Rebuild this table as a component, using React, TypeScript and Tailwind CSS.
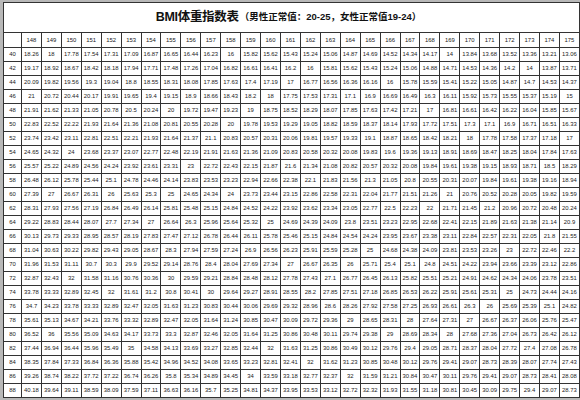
const heights = Array.from({ length: 28 }, (_, i) => 148 + i);
const weights = Array.from({ length: 25 }, (_, i) => 40 + i * 2);

function bmi(w: number, h: number) {
  const v = w / ((h / 100) * (h / 100));
  if (Math.abs(v - Math.round(v)) < 0.035) return String(Math.round(v));
  return String(Math.round(v * 100) / 100);
}

export default function App() {
  return (
    <div className="w-[580px] h-[400px] bg-[#b8b8b8] pl-[3px] pt-[2px] overflow-hidden">
      <div className="w-[577px] bg-white border-t border-[#333]">
        <div className="h-[29px] flex items-center justify-center border-x border-[#333] font-bold text-[#111] pr-[6px]" style={{ fontFamily: "'Liberation Sans', 'Noto Sans CJK SC', sans-serif" }}>
          <span className="text-[12.5px] tracking-tight">BMI体重指数表</span>
          <span className="text-[9.5px] ml-[1px]">（男性正常值：20-25，女性正常值19-24）</span>
        </div>
        <table className="w-[577px] table-fixed border-collapse text-[5.9px] text-[#1a1a1a]" style={{ fontFamily: "'Liberation Sans', sans-serif" }}>
          <colgroup>
            <col className="w-[18px]" />
            {heights.map((h) => (
              <col key={h} />
            ))}
          </colgroup>
          <thead>
            <tr className="h-[15px]">
              <th className="border border-[#333] font-normal"></th>
              {heights.map((h) => (
                <th key={h} className="border border-[#333] font-normal text-center">
                  {h}
                </th>
              ))}
            </tr>
          </thead>
          <tbody>
            {weights.map((w) => (
              <tr key={w} className="h-[14px]">
                <td className="border border-[#333] text-center">{w}</td>
                {heights.map((h) => (
                  <td key={h} className="border border-[#333] text-center whitespace-nowrap p-0">
                    {bmi(w, h)}
                  </td>
                ))}
              </tr>
            ))}
          </tbody>
        </table>
      </div>
    </div>
  );
}
